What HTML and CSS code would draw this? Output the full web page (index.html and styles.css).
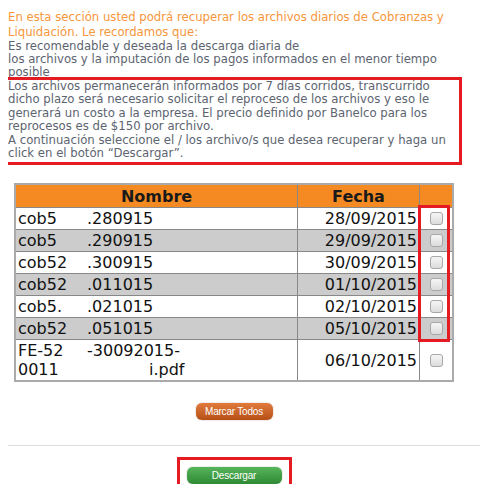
FILE: index.html
```html
<!DOCTYPE html>
<html>
<head>
<meta http-equiv="Content-Type" content="text/html; charset=utf-8">
<title>Recuperar archivos</title>
<link rel="stylesheet" href="styles.css">
</head>
<body>

<div class="page">
	<p class="lead">En esta sección usted podrá recuperar los archivos diarios de Cobranzas y Liquidación. Le recordamos que:</p>
	<p class="note">Es recomendable y deseada la descarga diaria de<br>los archivos y la imputación de los pagos informados en el menor tiempo posible</p>
	<p class="note notice">Los archivos permanecerán informados por 7 días corridos, transcurrido dicho plazo será necesario solicitar el reproceso de los archivos y eso le generará un costo a la empresa. El precio definido por Banelco para los reprocesos es de $150 por archivo.<br>A continuación seleccione el / los archivo/s que desea recuperar y haga un click en el botón “Descargar”.</p>

	<!-- listado de archivos -->
	<table class="files" cellspacing="0">
	<tr class="head">
		<td>Nombre</td>
		<td>Fecha</td>
		<td></td>
	</tr>
	<tr>
		<td><span class="cut">cob5</span>.280915</td>
		<td class="date">28/09/2015</td>
		<td class="chk"><span class="box"></span></td>
	</tr>
	<tr class="alt">
		<td><span class="cut">cob5</span>.290915</td>
		<td class="date">29/09/2015</td>
		<td class="chk"><span class="box"></span></td>
	</tr>
	<tr>
		<td><span class="cut">cob52</span>.300915</td>
		<td class="date">30/09/2015</td>
		<td class="chk"><span class="box"></span></td>
	</tr>
	<tr class="alt">
		<td><span class="cut">cob52</span>.011015</td>
		<td class="date">01/10/2015</td>
		<td class="chk"><span class="box"></span></td>
	</tr>
	<tr>
		<td><span class="cut">cob5.</span>.021015</td>
		<td class="date">02/10/2015</td>
		<td class="chk"><span class="box"></span></td>
	</tr>
	<tr class="alt">
		<td><span class="cut">cob52</span>.051015</td>
		<td class="date">05/10/2015</td>
		<td class="chk"><span class="box"></span></td>
	</tr>
	<tr>
		<td><span class="cut">FE-52</span>-30092015-<br><span class="cut">0011</span><span class="cut wide"></span>i.pdf</td>
		<td class="date">06/10/2015</td>
		<td class="chk"><span class="box"></span></td>
	</tr>
	</table>

	<div class="actions first"><a class="btn orange">Marcar Todos</a></div>
	<hr>
	<div class="actions"><a class="btn green">Descargar</a></div>

	<!-- marcas rojas -->
	<div class="mark mark-text"></div>
	<div class="mark mark-checks"></div>
	<div class="mark mark-btn"></div>
</div>

</body>
</html>
```
FILE: styles.css
```css
* {
font-family: "DejaVu Sans", Verdana, sans-serif;
}
body {
margin: 8px;
}
.page {
position: relative;
}
p {
margin: 0;
width: 452px;
}
.lead {
color: #f7963a;
font-size: 11.7px;
line-height: 15px;
padding-top: 2px;
}
.note {
color: #5c6470;
font-size: 11.7px;
line-height: 13px;
}
.notice {
margin-top: 1px;
line-height: 13.4px;
}
.files {
margin: 23px 0 0 6px;
width: 440px;
border: 2px solid #aaa;
border-collapse: collapse;
}
.files td {
font-size: 16px;
color: #111;
padding: 1px 2px;
line-height: 19px;
border-left: 1px solid #888;
border-bottom: 1px solid #888;
white-space: nowrap;
}
.files tr.alt td {
background: #ccc;
}
.files tr.head td {
background: #f58a22;
font-weight: bold;
text-align: center;
color: #1a1a1a;
height: 20px;
}
.files td.date {
text-align: right;
width: 117px;
}
.files td.chk {
text-align: center;
width: 28px;
}
.cut {
display: inline-block;
width: 69px;
}
.cut.wide {
width: 62px;
}
.box {
display: inline-block;
width: 11px;
height: 11px;
border: 1px solid #a8a8a8;
border-radius: 3px;
background: linear-gradient(#f6f6f6, #dcdcdc);
vertical-align: -1px;
}
.actions {
width: 440px;
margin-left: 6px;
}
.actions.first {
margin-top: 21px;
}
.btn {
display: block;
margin: 0 auto;
text-align: center;
font-family: "Liberation Sans", Arial, sans-serif;
font-size: 10px;
letter-spacing: -0.2px;
color: #fff;
height: 17px;
line-height: 17px;
border-radius: 6px;
}
.orange {
width: 77px;
background: linear-gradient(#e07b3c, #b64f16);
box-shadow: 0 0 1px #7a3a10;
}
.green {
width: 95px;
margin-top: 21px;
background: linear-gradient(#56b45a, #2f8a34);
box-shadow: 0 0 1px #1f6a24;
}
hr {
border: 0;
border-top: 1px solid #ddd;
margin: 25px 0 0;
}
.mark {
position: absolute;
border: 3px solid #e41b23;
}
.mark-text {
left: -5px;
top: 69px;
width: 453px;
height: 82px;
}
.mark-checks {
left: 410px;
top: 197px;
width: 26px;
height: 131px;
}
.mark-btn {
left: 169px;
top: 449px;
width: 109px;
height: 30px;
}
```
